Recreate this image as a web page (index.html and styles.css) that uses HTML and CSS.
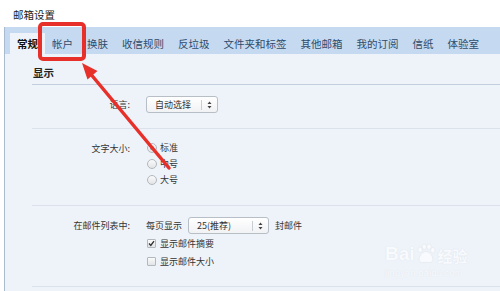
FILE: index.html
```html
<!DOCTYPE html>
<html lang="zh-CN">
<head>
  <meta charset="UTF-8">
  <title>邮箱设置</title>
  <link rel="stylesheet" href="styles.css">
</head>
<body>
  <div class="title">邮箱设置</div>
  <div class="panel">
    <!-- tab strip -->
    <div class="tabs">
      <div class="tab active">常规</div>
      <div class="tab">帐户</div>
      <div class="tab">换肤</div>
      <div class="tab">收信规则</div>
      <div class="tab">反垃圾</div>
      <div class="tab">文件夹和标签</div>
      <div class="tab">其他邮箱</div>
      <div class="tab">我的订阅</div>
      <div class="tab">信纸</div>
      <div class="tab">体验室</div>
    </div>
    <div class="content">
      <div class="section-title">显示</div>
      <div class="row">
        <div class="label">语言:</div>
        <div class="field">
          <div class="select sel-lang">
            <span class="sel-text">自动选择</span>
            <span class="sel-arrow"><svg width="5" height="8" viewBox="0 0 5 8"><path d="M2.5 0.5L4.5 3H0.5Z M2.5 7.5L4.5 5H0.5Z" fill="#444"/></svg></span>
          </div>
        </div>
      </div>
      <div class="row">
        <div class="label">文字大小:</div>
        <div class="field">
          <div class="opt"><span class="radio checked"></span>标准</div>
          <div class="opt"><span class="radio"></span>中号</div>
          <div class="opt"><span class="radio"></span>大号</div>
        </div>
      </div>
      <div class="row">
        <div class="label">在邮件列表中:</div>
        <div class="field">
          <div class="inline">
            <span>每页显示</span>
            <div class="select sel-count">
              <span class="sel-text">25(推荐)</span>
              <span class="sel-arrow"><svg width="5" height="8" viewBox="0 0 5 8"><path d="M2.5 0.5L4.5 3H0.5Z M2.5 7.5L4.5 5H0.5Z" fill="#444"/></svg></span>
            </div>
            <span>封邮件</span>
          </div>
          <div class="check-line"><span class="check checked"><svg width="7" height="7" viewBox="0 0 7 7"><path d="M1 3.6L2.8 5.4L6 1.2" fill="none" stroke="#333" stroke-width="1.4"/></svg></span>显示邮件摘要</div>
          <div class="check-line"><span class="check"></span>显示邮件大小</div>
        </div>
      </div>
    </div>
  </div>

  <!-- annotation drawn on top of the screenshot -->
  <svg class="mark" width="500" height="291" viewBox="0 0 500 291">
    <rect x="40" y="24" width="44" height="35" rx="3" fill="none" stroke="#e8302a" stroke-width="4"/>
    <line x1="89" y1="72" x2="169" y2="168" stroke="#e8302a" stroke-width="3.5" stroke-linecap="round"/>
    <path d="M82 63 L97.5 71 L87.5 79.5 Z" fill="#e8302a"/>
  </svg>

  <div class="watermark">
    <div class="wm-logo"><span>Bai</span><svg width="22" height="24" viewBox="0 0 26 24"><g fill="#fff" stroke="#d6dbe2" stroke-width="0.6"><ellipse cx="6" cy="7" rx="2.6" ry="3.2"/><ellipse cx="11" cy="3.5" rx="2.6" ry="3.2"/><ellipse cx="16.5" cy="3.5" rx="2.6" ry="3.2"/><ellipse cx="21" cy="7.5" rx="2.6" ry="3.2"/><path d="M13 9 C8 9 4 16 5 20 C6 23 10 22 13 22 C16 22 20 23 21 20 C22 16 18 9 13 9Z"/></g></svg><span class="wm-cn">经验</span></div>
    <div class="wm-url">jingyan.baidu.com</div>
  </div>
</body>
</html>
```

FILE: styles.css
```css
html, body {
  margin: 0;
  padding: 0;
}
body {
  width: 500px;
  height: 291px;
  overflow: hidden;
  position: relative;
  background: #fff;
  font-family: "Noto Sans CJK SC", "Noto Sans", sans-serif;
  color: #333;
}

.title {
  height: 27px;
  line-height: 16px;
  padding: 7px 0 0 13px;
  box-sizing: border-box;
  font-size: 10.5px;
  color: #222;
}

.panel {
  margin-left: 4px;
  border-left: 1px solid #a9bccf;
  background: #eef3fa;
  height: 264px;
}

/* tabs */
.tabs {
  display: flex;
  align-items: flex-end;
  height: 27px;
  padding-left: 5px;
  background: #c5daf1;
}
.tab {
  height: 21px;
  line-height: 21px;
  padding: 0 7px;
  font-size: 10.5px;
  color: #2f4b6b;
  white-space: nowrap;
}
.tab.active {
  background: #eef3fa;
  color: #111;
  font-weight: bold;
}

.content {
  padding-left: 27px;
}
.section-title {
  padding: 10px 0 2px 1px;
  line-height: 18px;
  font-size: 10.5px;
  font-weight: bold;
  color: #222;
  border-bottom: 1px solid #c3cfdc;
}

.row {
  display: flex;
  padding: 11px 0 15px;
  border-bottom: 1px solid #dbe2eb;
  font-size: 9px;
}
.row:nth-child(3) {
  padding-bottom: 17px;
}
.row:nth-child(4) {
  padding-bottom: 16px;
}
.label {
  width: 98px;
  margin-right: 16px;
  text-align: right;
  line-height: 17px;
  color: #333;
}
.field {
  display: flex;
  flex-direction: column;
}

/* fake selects */
.select {
  display: flex;
  align-items: center;
  height: 17px;
  box-sizing: border-box;
  border: 1px solid #b8bec6;
  border-radius: 3px;
  background: linear-gradient(#ffffff, #f1f2f4);
  color: #333;
}
.sel-lang { width: 72px; }
.sel-count { width: 81px; }
.sel-text {
  flex: 1;
  padding-left: 8px;
  line-height: 15px;
}
.sel-arrow {
  width: 15px;
  height: 10px;
  border-left: 1px solid #c9ced4;
  display: flex;
  align-items: center;
  justify-content: center;
}
.sel-arrow svg { display: block; }

.opt {
  display: flex;
  align-items: center;
  line-height: 16px;
  height: 16px;
}
.radio {
  width: 8px;
  height: 8px;
  border: 1px solid #b3b8be;
  border-radius: 50%;
  background: linear-gradient(#fafafa, #e2e4e7);
  margin: 0 3px 0 1px;
  box-sizing: content-box;
  position: relative;
}
.radio.checked::after {
  content: "";
  position: absolute;
  left: 2px;
  top: 2px;
  width: 4px;
  height: 4px;
  border-radius: 50%;
  background: #8c9096;
}

.inline {
  display: flex;
  align-items: center;
  gap: 6px;
  height: 17px;
}
.inline span { line-height: 17px; }

.check-line {
  display: flex;
  align-items: center;
  height: 18px;
}
.check-line:first-of-type { margin-top: 2px; }
.check {
  width: 7px;
  height: 7px;
  border: 1px solid #b3b8be;
  border-radius: 1px;
  background: linear-gradient(#fafafa, #e2e4e7);
  margin: 0 4px 0 1px;
  display: flex;
  align-items: center;
  justify-content: center;
}
.check svg { display: block; }

/* overlays */
.mark {
  position: absolute;
  top: 0;
  left: 0;
  pointer-events: none;
}
.watermark {
  position: absolute;
  left: 385px;
  top: 242px;
  opacity: 0.6;
  pointer-events: none;
}
.wm-logo {
  display: flex;
  align-items: flex-end;
  font-family: "Liberation Sans", sans-serif;
  font-size: 19px;
  font-weight: bold;
  color: #fff;
  text-shadow: 0 0 1px #c9d0d9;
  line-height: 24px;
}
.wm-cn {
  font-family: "Noto Sans CJK SC", sans-serif;
  font-size: 15px;
  line-height: 20px;
  margin-left: 1px;
}
.wm-url {
  font-family: "Liberation Sans", sans-serif;
  font-size: 9px;
  color: #fff;
  text-shadow: 0 0 1px #cdd3db;
  margin-top: 2px;
  letter-spacing: 0.3px;
}
```
